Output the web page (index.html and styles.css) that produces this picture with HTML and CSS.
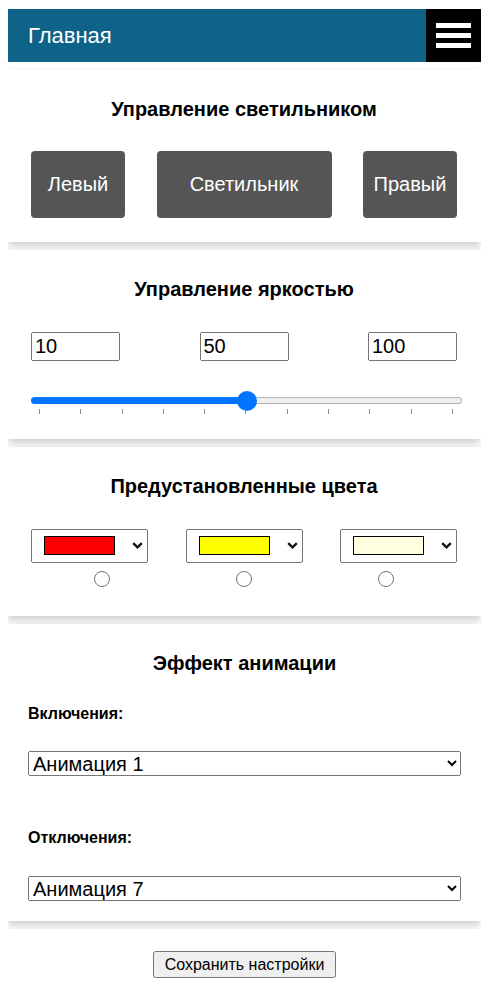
FILE: index.html
```html
<!DOCTYPE html>
<html lang="ru">
<head>
<meta charset="utf-8">
<title>Главная</title>
<link rel="stylesheet" href="styles.css">
</head>
<body>
<header class="topbar">
  <span class="topbar-title">Главная</span>
  <button class="burger" aria-label="Меню"><span></span><span></span><span></span></button>
</header>

<section class="card card-lamp">
  <h3 class="card-title">Управление светильником</h3>
  <div class="btn-row">
    <button class="lamp-btn side">Левый</button>
    <button class="lamp-btn main">Светильник</button>
    <button class="lamp-btn side">Правый</button>
  </div>
</section>

<section class="card card-bright">
  <h3 class="card-title">Управление яркостью</h3>
  <div class="input-row">
    <input class="num" type="text" value="10">
    <input class="num" type="text" value="50">
    <input class="num" type="text" value="100">
  </div>
  <input class="range" type="range" min="0" max="100" step="1" value="50">
  <div class="ticks">
    <i></i><i></i><i></i><i></i><i></i><i></i><i></i><i></i><i></i><i></i><i></i>
  </div>
</section>

<section class="card card-colors">
  <h3 class="card-title">Предустановленные цвета</h3>
  <div class="color-row">
    <button class="color-pick"><span class="swatch" style="background:#ff0000"></span><svg class="chev" width="11" height="7" viewBox="0 0 11 7"><path d="M1.2 1.2 L5.5 5.3 L9.8 1.2" fill="none" stroke="#111" stroke-width="2.3"/></svg></button>
    <button class="color-pick"><span class="swatch" style="background:#ffff00"></span><svg class="chev" width="11" height="7" viewBox="0 0 11 7"><path d="M1.2 1.2 L5.5 5.3 L9.8 1.2" fill="none" stroke="#111" stroke-width="2.3"/></svg></button>
    <button class="color-pick"><span class="swatch" style="background:#ffffe0"></span><svg class="chev" width="11" height="7" viewBox="0 0 11 7"><path d="M1.2 1.2 L5.5 5.3 L9.8 1.2" fill="none" stroke="#111" stroke-width="2.3"/></svg></button>
  </div>
  <div class="radio-row">
    <input type="radio" name="preset">
    <input type="radio" name="preset">
    <input type="radio" name="preset">
  </div>
</section>

<section class="card card-anim">
  <h3 class="card-title">Эффект анимации</h3>
  <div class="field-label first">Включения:</div>
  <select class="anim">
    <option>Анимация 1</option>
  </select>
  <div class="field-label second">Отключения:</div>
  <select class="anim">
    <option>Анимация 7</option>
  </select>
</section>

<section class="card save-card">
  <button class="save">Сохранить настройки</button>
</section>
</body>
</html>
```

FILE: styles.css
```css
html, body {
  background: #fff;
}
body {
  margin: 9px 17px 8px 8px;
  font-family: "Liberation Sans", Arial, sans-serif;
  color: #000;
}
.topbar {
  display: flex;
  align-items: center;
  justify-content: space-between;
  height: 53px;
  background: #0f6388;
}
.topbar-title {
  padding-left: 20px;
  color: #fff;
  font-size: 22px;
}
.burger {
  width: 55px;
  height: 53px;
  background: #000;
  border: 0;
  padding: 0;
  display: flex;
  flex-direction: column;
  align-items: center;
  justify-content: center;
  gap: 5px;
}
.burger span {
  display: block;
  width: 35px;
  height: 5px;
  background: #fff;
}
.card {
  background: #fff;
  box-shadow: 0 4px 8px 0 rgba(0, 0, 0, 0.2);
  margin-top: 8px;
  padding: 28px 24px 24px 23px;
}
.card-title {
  margin: 0;
  text-align: center;
  font-size: 20px;
  line-height: 22px;
  font-weight: bold;
}

/* card 1 */
.card-lamp {
  padding-bottom: 23.7px;
}
.btn-row {
  display: flex;
  justify-content: space-between;
  margin-top: 31px;
}
.lamp-btn {
  height: 67px;
  background: #555;
  color: #fff;
  border: 0;
  border-radius: 4px;
  font-family: "Liberation Sans", Arial, sans-serif;
  font-size: 20px;
  padding: 0;
}
.lamp-btn.side { width: 94px; }
.lamp-btn.main { width: 175px; }

/* card 2 */
.card-bright {
  padding-bottom: 25.6px;
}
.input-row {
  display: flex;
  justify-content: space-between;
  margin-top: 32px;
}
.num {
  box-sizing: border-box;
  width: 89px;
  height: 29px;
  font-family: "Liberation Sans", Arial, sans-serif;
  font-size: 20px;
  padding: 1px 2px;
  margin: 0;
}
.range {
  -webkit-appearance: none;
  appearance: none;
  display: block;
  width: 431px;
  height: 20px;
  margin: 30px 0 0 0;
  padding: 0;
  background: transparent;
}
.range::-webkit-slider-runnable-track {
  height: 7px;
  border: 1px solid transparent;
  border-radius: 5px;
  background:
    linear-gradient(to right, transparent 50%, #efefef 50%) padding-box,
    linear-gradient(to right, #0075ff 50%, #b3b3b3 50%) border-box;
}
.range::-webkit-slider-thumb {
  -webkit-appearance: none;
  appearance: none;
  width: 20px;
  height: 20px;
  margin-top: -7px;
  border-radius: 50%;
  background: #0075ff;
  border: 0;
}
.ticks {
  display: flex;
  justify-content: space-between;
  width: 431px;
  box-sizing: border-box;
  padding: 0 9px 0 8px;
  margin-top: -2px;
}
.ticks i {
  display: block;
  width: 1px;
  height: 5px;
  background: #8e8e8e;
}

/* card 3 */
.card-colors {
  padding-bottom: 29px;
}
.color-row {
  display: flex;
  justify-content: space-between;
  margin-top: 31.5px;
}
.color-pick {
  box-sizing: border-box;
  width: 117px;
  height: 34px;
  margin: 0;
  padding: 0 4px 0 12px;
  display: flex;
  align-items: center;
  background: #fff;
  border: 1px solid #767676;
  border-radius: 2px;
}
.swatch {
  display: block;
  box-sizing: border-box;
  width: 71px;
  height: 19px;
  border: 1px solid #000;
}
.chev {
  display: block;
  margin-left: auto;
}
.radio-row {
  display: grid;
  grid-template-columns: repeat(3, 1fr);
  justify-items: center;
  margin-top: 8px;
}
.radio-row input {
  width: 16px;
  height: 16px;
  margin: 0;
}

/* card 4 */
.card-anim {
  padding: 28px 20px 20.7px 20px;
}
.field-label {
  font-size: 16px;
  line-height: 18px;
  font-weight: bold;
}
.field-label.first {
  margin-top: 31px;
}
.field-label.second {
  margin-top: 53px;
}
.anim {
  display: block;
  width: 100%;
  height: 25px;
  margin-top: 28.5px;
  font-family: "Liberation Sans", Arial, sans-serif;
  font-size: 20px;
}

/* card 5 */
.save-card {
  padding: 22px 0 20px;
  text-align: center;
}
.save {
  box-sizing: border-box;
  height: 27px;
  font-family: "Liberation Sans", Arial, sans-serif;
  font-size: 16px;
  padding: 0 10px;
}
```
